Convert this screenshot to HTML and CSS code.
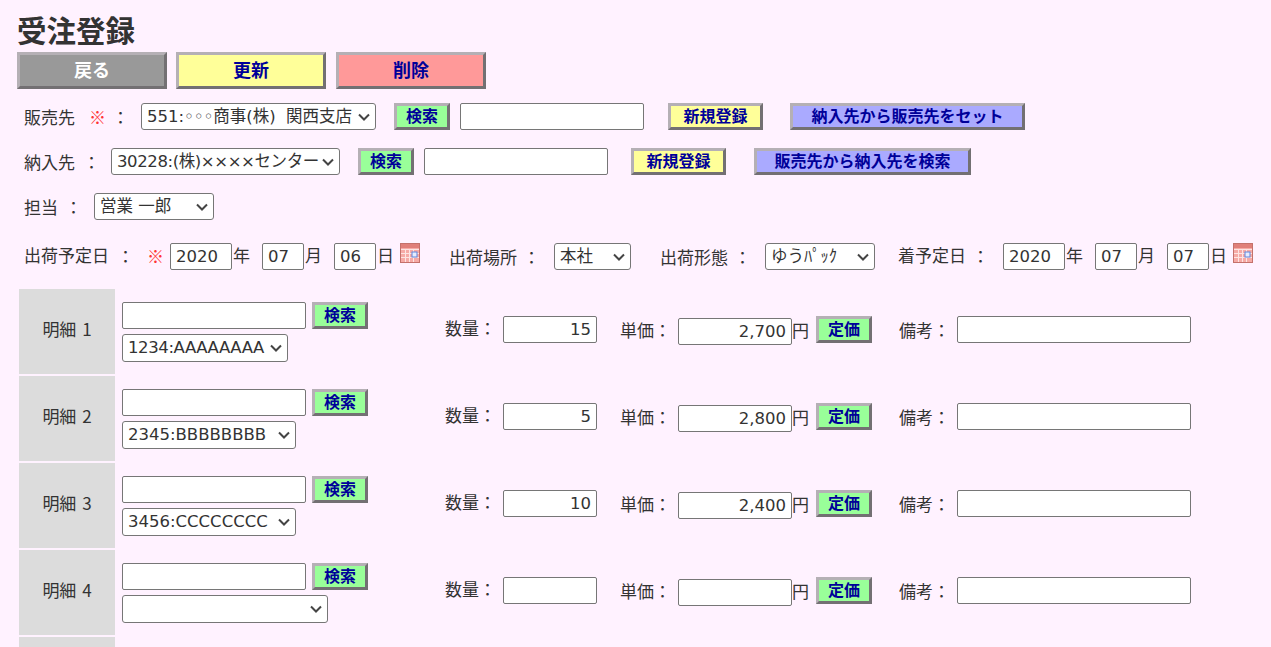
FILE: index.html
```html
<!DOCTYPE html>
<html lang="ja">
<head>
    <meta charset="UTF-8">
    <meta name="viewport" content="width=device-width, initial-scale=1.0">
    <title>受注登録</title>
    <link rel="stylesheet" href="styles.css">
</head>
<body>
    <svg class="sprite" width="0" height="0">
        <symbol id="cal" viewBox="0 0 20 20">
            <rect x="0.5" y="0.5" width="19" height="19" fill="#f6aaa6" stroke="#c4716c"/>
            <rect x="1" y="1" width="18" height="4" fill="#e07f7a"/>
            <path d="M1 6.5h18M1 10.5h18M1 14.5h18M5.5 6v13M9.5 6v13M13.5 6v13" stroke="#fde4e2" fill="none"/>
            <rect x="12" y="9" width="5" height="5" fill="#e4ecff" stroke="#5f86dc"/>
        </symbol>
    </svg>

    <h1>受注登録</h1>
    <div class="main-buttons">
        <button class="btn btn-big btn-gray">戻る</button>
        <button class="btn btn-big btn-yellow">更新</button>
        <button class="btn btn-big btn-red">削除</button>
    </div>

    <div class="row row-1">
        <span class="label">販売先</span><span class="req req-1">※</span><span class="colon">：</span>
        <select class="sel-customer"><option>551:◦◦◦商事(株) &nbsp;関西支店</option></select>
        <button class="btn btn-green ml-18">検索</button>
        <input type="text" class="inp-search ml-10">
        <button class="btn btn-yellow btn-new ml-24">新規登録</button>
        <button class="btn btn-blue btn-set ml-27">納入先から販売先をセット</button>
    </div>
    <div class="row row-2">
        <span class="label">納入先</span><span class="colon colon-2">：</span>
        <select class="sel-dest"><option>30228:(株)××××センター</option></select>
        <button class="btn btn-green ml-18">検索</button>
        <input type="text" class="inp-search ml-10">
        <button class="btn btn-yellow btn-new ml-23">新規登録</button>
        <button class="btn btn-blue btn-find ml-28">販売先から納入先を検索</button>
    </div>
    <div class="row row-3">
        <span class="label">担当</span><span class="colon colon-3">：</span>
        <select class="sel-staff"><option>営業 一郎</option></select>
    </div>
    <div class="row row-4">
        <span class="label label-up">出荷予定日</span><span class="colon colon-4">：</span><span class="req req-2">※</span>
        <input type="text" class="inp-year" value="2020"><span class="unit">年</span>
        <input type="text" class="inp-md ml-12" value="07"><span class="unit">月</span>
        <input type="text" class="inp-md ml-12" value="06"><span class="unit">日</span>
        <svg class="cal"><use href="#cal"/></svg>
        <span class="label ml-29">出荷場所</span><span class="colon colon-5">：</span>
        <select class="sel-place"><option>本社</option></select>
        <span class="label ml-29">出荷形態</span><span class="colon colon-5">：</span>
        <select class="sel-form"><option>ゆうﾊﾟｯｸ</option></select>
        <span class="label label-up ml-23">着予定日</span><span class="colon colon-6">：</span>
        <input type="text" class="inp-year" value="2020"><span class="unit">年</span>
        <input type="text" class="inp-md ml-12" value="07"><span class="unit">月</span>
        <input type="text" class="inp-md ml-12" value="07"><span class="unit">日</span>
        <svg class="cal"><use href="#cal"/></svg>
    </div>

    <div class="details">
        <div class="detail">
            <div class="detail-head">明細 1</div>
            <div class="item">
                <div class="item-top"><input type="text" class="inp-search"><button class="btn btn-green">検索</button></div>
                <select class="sel-item-a"><option>1234:AAAAAAAA</option></select>
            </div>
            <span class="qty-label">数量：</span><input type="text" class="inp-qty" value="15">
            <span class="price-label">単価：</span><input type="text" class="inp-price" value="2,700"><span class="yen">円</span>
            <button class="btn btn-green btn-list">定価</button>
            <span class="note-label">備考：</span><input type="text" class="inp-note">
        </div>
        <div class="detail">
            <div class="detail-head">明細 2</div>
            <div class="item">
                <div class="item-top"><input type="text" class="inp-search"><button class="btn btn-green">検索</button></div>
                <select class="sel-item-b"><option>2345:BBBBBBBB</option></select>
            </div>
            <span class="qty-label">数量：</span><input type="text" class="inp-qty" value="5">
            <span class="price-label">単価：</span><input type="text" class="inp-price" value="2,800"><span class="yen">円</span>
            <button class="btn btn-green btn-list">定価</button>
            <span class="note-label">備考：</span><input type="text" class="inp-note">
        </div>
        <div class="detail">
            <div class="detail-head">明細 3</div>
            <div class="item">
                <div class="item-top"><input type="text" class="inp-search"><button class="btn btn-green">検索</button></div>
                <select class="sel-item-b"><option>3456:CCCCCCCC</option></select>
            </div>
            <span class="qty-label">数量：</span><input type="text" class="inp-qty" value="10">
            <span class="price-label">単価：</span><input type="text" class="inp-price" value="2,400"><span class="yen">円</span>
            <button class="btn btn-green btn-list">定価</button>
            <span class="note-label">備考：</span><input type="text" class="inp-note">
        </div>
        <div class="detail">
            <div class="detail-head">明細 4</div>
            <div class="item">
                <div class="item-top"><input type="text" class="inp-search"><button class="btn btn-green">検索</button></div>
                <select class="sel-item-c"><option></option></select>
            </div>
            <span class="qty-label">数量：</span><input type="text" class="inp-qty">
            <span class="price-label">単価：</span><input type="text" class="inp-price"><span class="yen">円</span>
            <button class="btn btn-green btn-list">定価</button>
            <span class="note-label">備考：</span><input type="text" class="inp-note">
        </div>
        <div class="detail-next"></div>
    </div>
</body>
</html>
```

FILE: styles.css
```css
body {
    margin: 0;
    padding: 0 0 0 17px;
    background-color: #fff2ff;
    color: #333;
    font-family: "DejaVu Sans", "Noto Sans CJK JP", sans-serif;
    font-size: 17px;
}
.sprite {
    display: block;
    height: 0;
}
h1 {
    margin: 0;
    padding-top: 12px;
    height: 52px;
    box-sizing: border-box;
    line-height: 34px;
    font-size: 29.5px;
    font-family: "Noto Sans CJK JP", sans-serif;
    font-weight: bold;
}
.main-buttons {
    display: flex;
    gap: 9px;
    height: 37px;
}
.main-buttons .btn-red {
    margin-left: 1px;
}
.btn {
    box-sizing: border-box;
    height: 27px;
    width: 56px;
    padding: 0 0 2px;
    border-width: 3px;
    border-style: solid;
    border-color: #b5b0b5 #737073 #737073 #b5b0b5;
    color: #000099;
    font-family: "Noto Sans CJK JP", sans-serif;
    font-size: 16px;
    font-weight: bold;
    line-height: 19px;
    white-space: nowrap;
    flex: none;
}
.btn-big {
    width: 150px;
    height: 37px;
    font-size: 18px;
}
.btn-gray {
    background-color: #999;
    color: #fff;
}
.btn-yellow {
    background-color: #ffff99;
}
.btn-red {
    background-color: #ff9999;
}
.btn-green {
    background-color: #99ff99;
}
.btn-blue {
    background-color: #aaaaff;
}
.btn-new {
    width: 95px;
}
.btn-set {
    width: 235px;
}
.btn-find {
    width: 217px;
}
input, select {
    box-sizing: border-box;
    height: 27px;
    margin: 0;
    border: 1px solid #767676;
    border-radius: 2px;
    background-color: #fff;
    color: #333;
    font-family: "DejaVu Sans", "Noto Sans CJK JP", sans-serif;
    font-size: 16.5px;
    flex: none;
}
select {
    appearance: none;
    border-radius: 3px;
    padding: 0 19px 0 5px;
    background-image: url("data:image/svg+xml,%3Csvg xmlns='http://www.w3.org/2000/svg' width='12' height='8'%3E%3Cpath d='M1 1.5l5 5 5-5' fill='none' stroke='%23444' stroke-width='2'/%3E%3C/svg%3E");
    background-repeat: no-repeat;
    background-position: right 5px center;
}
input {
    padding: 1px 5px;
}
.row {
    display: flex;
    align-items: center;
    padding-left: 7px;
}
.row-1 {
    margin-top: 14px;
}
.row-2, .row-3 {
    margin-top: 18px;
}
.row-4 {
    margin-top: 22px;
}
.label {
    font-family: "Noto Sans CJK JP", sans-serif;
    line-height: 20px;
    flex: none;
}
.label-up {
    margin-bottom: 3px;
}
.req {
    color: #ff3333;
    font-family: "Noto Sans CJK JP", sans-serif;
    flex: none;
}
.req-1 {
    margin-left: 14px;
}
.req-2 {
    margin-right: 6px;
    margin-bottom: 3px;
}
.colon {
    font-family: "Noto Sans CJK JP", sans-serif;
    flex: none;
    width: 17px;
}
.row-1 .colon {
    margin-left: 6px;
    margin-right: 12px;
}
.colon-2 {
    margin-left: 8px;
    margin-right: 11px;
}
.colon-3 {
    margin-left: 7px;
    margin-right: 12px;
}
.colon-4 {
    margin-left: 8px;
    margin-right: 13px;
    margin-bottom: 3px;
}
.colon-5 {
    margin-left: 6px;
    margin-right: 14px;
}
.colon-6 {
    margin-left: 6px;
    margin-right: 14px;
    margin-bottom: 3px;
}
.unit {
    font-family: "Noto Sans CJK JP", sans-serif;
    width: 17px;
    flex: none;
    margin-bottom: 4px;
    margin-left: 1px;
}
.cal {
    width: 20px;
    height: 20px;
    margin-left: 6px;
    margin-bottom: 7px;
    flex: none;
}
.ml-10 { margin-left: 10px; }
.ml-12 { margin-left: 12px; }
.ml-18 { margin-left: 18px; }
.ml-23 { margin-left: 23px; }
.ml-24 { margin-left: 24px; }
.ml-27 { margin-left: 27px; }
.ml-28 { margin-left: 28px; }
.ml-29 { margin-left: 29px; }
.sel-customer { width: 235px; }
.sel-dest { width: 229px; letter-spacing: -0.4px; }
.sel-staff { width: 120px; }
.sel-place { width: 77px; }
.sel-form { width: 110px; }
.sel-item-a { width: 166px; letter-spacing: -0.4px; }
.sel-item-b { width: 174px; }
.sel-item-c { width: 206px; }
.inp-search { width: 184px; }
.inp-year { width: 62px; }
.inp-md { width: 42px; }
.inp-qty { width: 94px; text-align: right; margin-bottom: 4px; }
.inp-price { width: 114px; text-align: right; }
.inp-note { width: 234px; margin-bottom: 4px; }
.details {
    margin-top: 18px;
    padding-left: 2px;
}
.detail {
    display: flex;
    align-items: center;
    height: 85px;
    margin-bottom: 2px;
}
.detail-head {
    display: flex;
    align-items: center;
    justify-content: center;
    width: 96px;
    height: 85px;
    padding-bottom: 7px;
    box-sizing: border-box;
    background-color: #dcdcdc;
    font-family: "Noto Sans CJK JP", sans-serif;
    word-spacing: 2px;
    flex: none;
}
.detail-next {
    width: 96px;
    height: 10px;
    background-color: #dcdcdc;
}
.item {
    display: flex;
    flex-direction: column;
    align-items: flex-start;
    gap: 5px;
    width: 323px;
    margin-left: 7px;
    flex: none;
}
.item select {
    height: 28px;
}
.item-top {
    display: flex;
    gap: 6px;
}
.qty-label, .price-label, .note-label, .yen {
    font-family: "Noto Sans CJK JP", sans-serif;
    flex: none;
}
.qty-label {
    width: 58px;
    margin-bottom: 8px;
}
.price-label {
    width: 58px;
    margin-left: 23px;
    margin-bottom: 5px;
}
.yen {
    width: 17px;
    margin-bottom: 5px;
}
.btn-list {
    margin-left: 7px;
    margin-bottom: 4px;
}
.note-label {
    width: 58px;
    margin-left: 27px;
    margin-bottom: 5px;
}
```
